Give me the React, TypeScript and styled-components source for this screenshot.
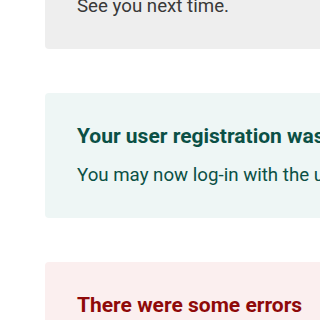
import React from "react";
import styled, { createGlobalStyle } from "styled-components";

const Global = createGlobalStyle`
  html, body { margin: 0; padding: 0; background: #ffffff; overflow: hidden; }
  body { font-family: Roboto, "Noto Sans", sans-serif; }
`;

const Page = styled.div`
  display: flex;
  flex-direction: column;
  gap: 44px;
  width: 640px;
  margin-top: -39px;
  padding-left: 45px;
`;

type Tone = "neutral" | "success" | "error";

const tones: Record<Tone, { bg: string; fg: string }> = {
  neutral: { bg: "#eeeeee", fg: "#383838" },
  success: { bg: "#eef6f5", fg: "#0b5045" },
  error: { bg: "#fbefef", fg: "#8f0a0a" },
};

const Notice = styled.section<{ $tone: Tone }>`
  background: ${(p) => tones[p.$tone].bg};
  color: ${(p) => tones[p.$tone].fg};
  border-radius: 4px;
  padding: 32px 32px 29px;
  white-space: nowrap;
`;

const Title = styled.h2`
  margin: 0 0 15px;
  font-size: 21px;
  line-height: 22px;
  font-weight: 700;
`;

const Text = styled.p`
  margin: 0;
  font-size: 18.7px;
  line-height: 27px;
  font-weight: 400;
`;

export default function App() {
  return (
    <>
      <Global />
      <Page>
        <Notice $tone="neutral">
          <Text>See you next time.</Text>
        </Notice>
        <Notice $tone="success">
          <Title>Your user registration was successful</Title>
          <Text>You may now log-in with the username you have chosen</Text>
        </Notice>
        <Notice $tone="error">
          <Title>There were some errors</Title>
          <Text>Please correct the errors below.</Text>
        </Notice>
      </Page>
    </>
  );
}
